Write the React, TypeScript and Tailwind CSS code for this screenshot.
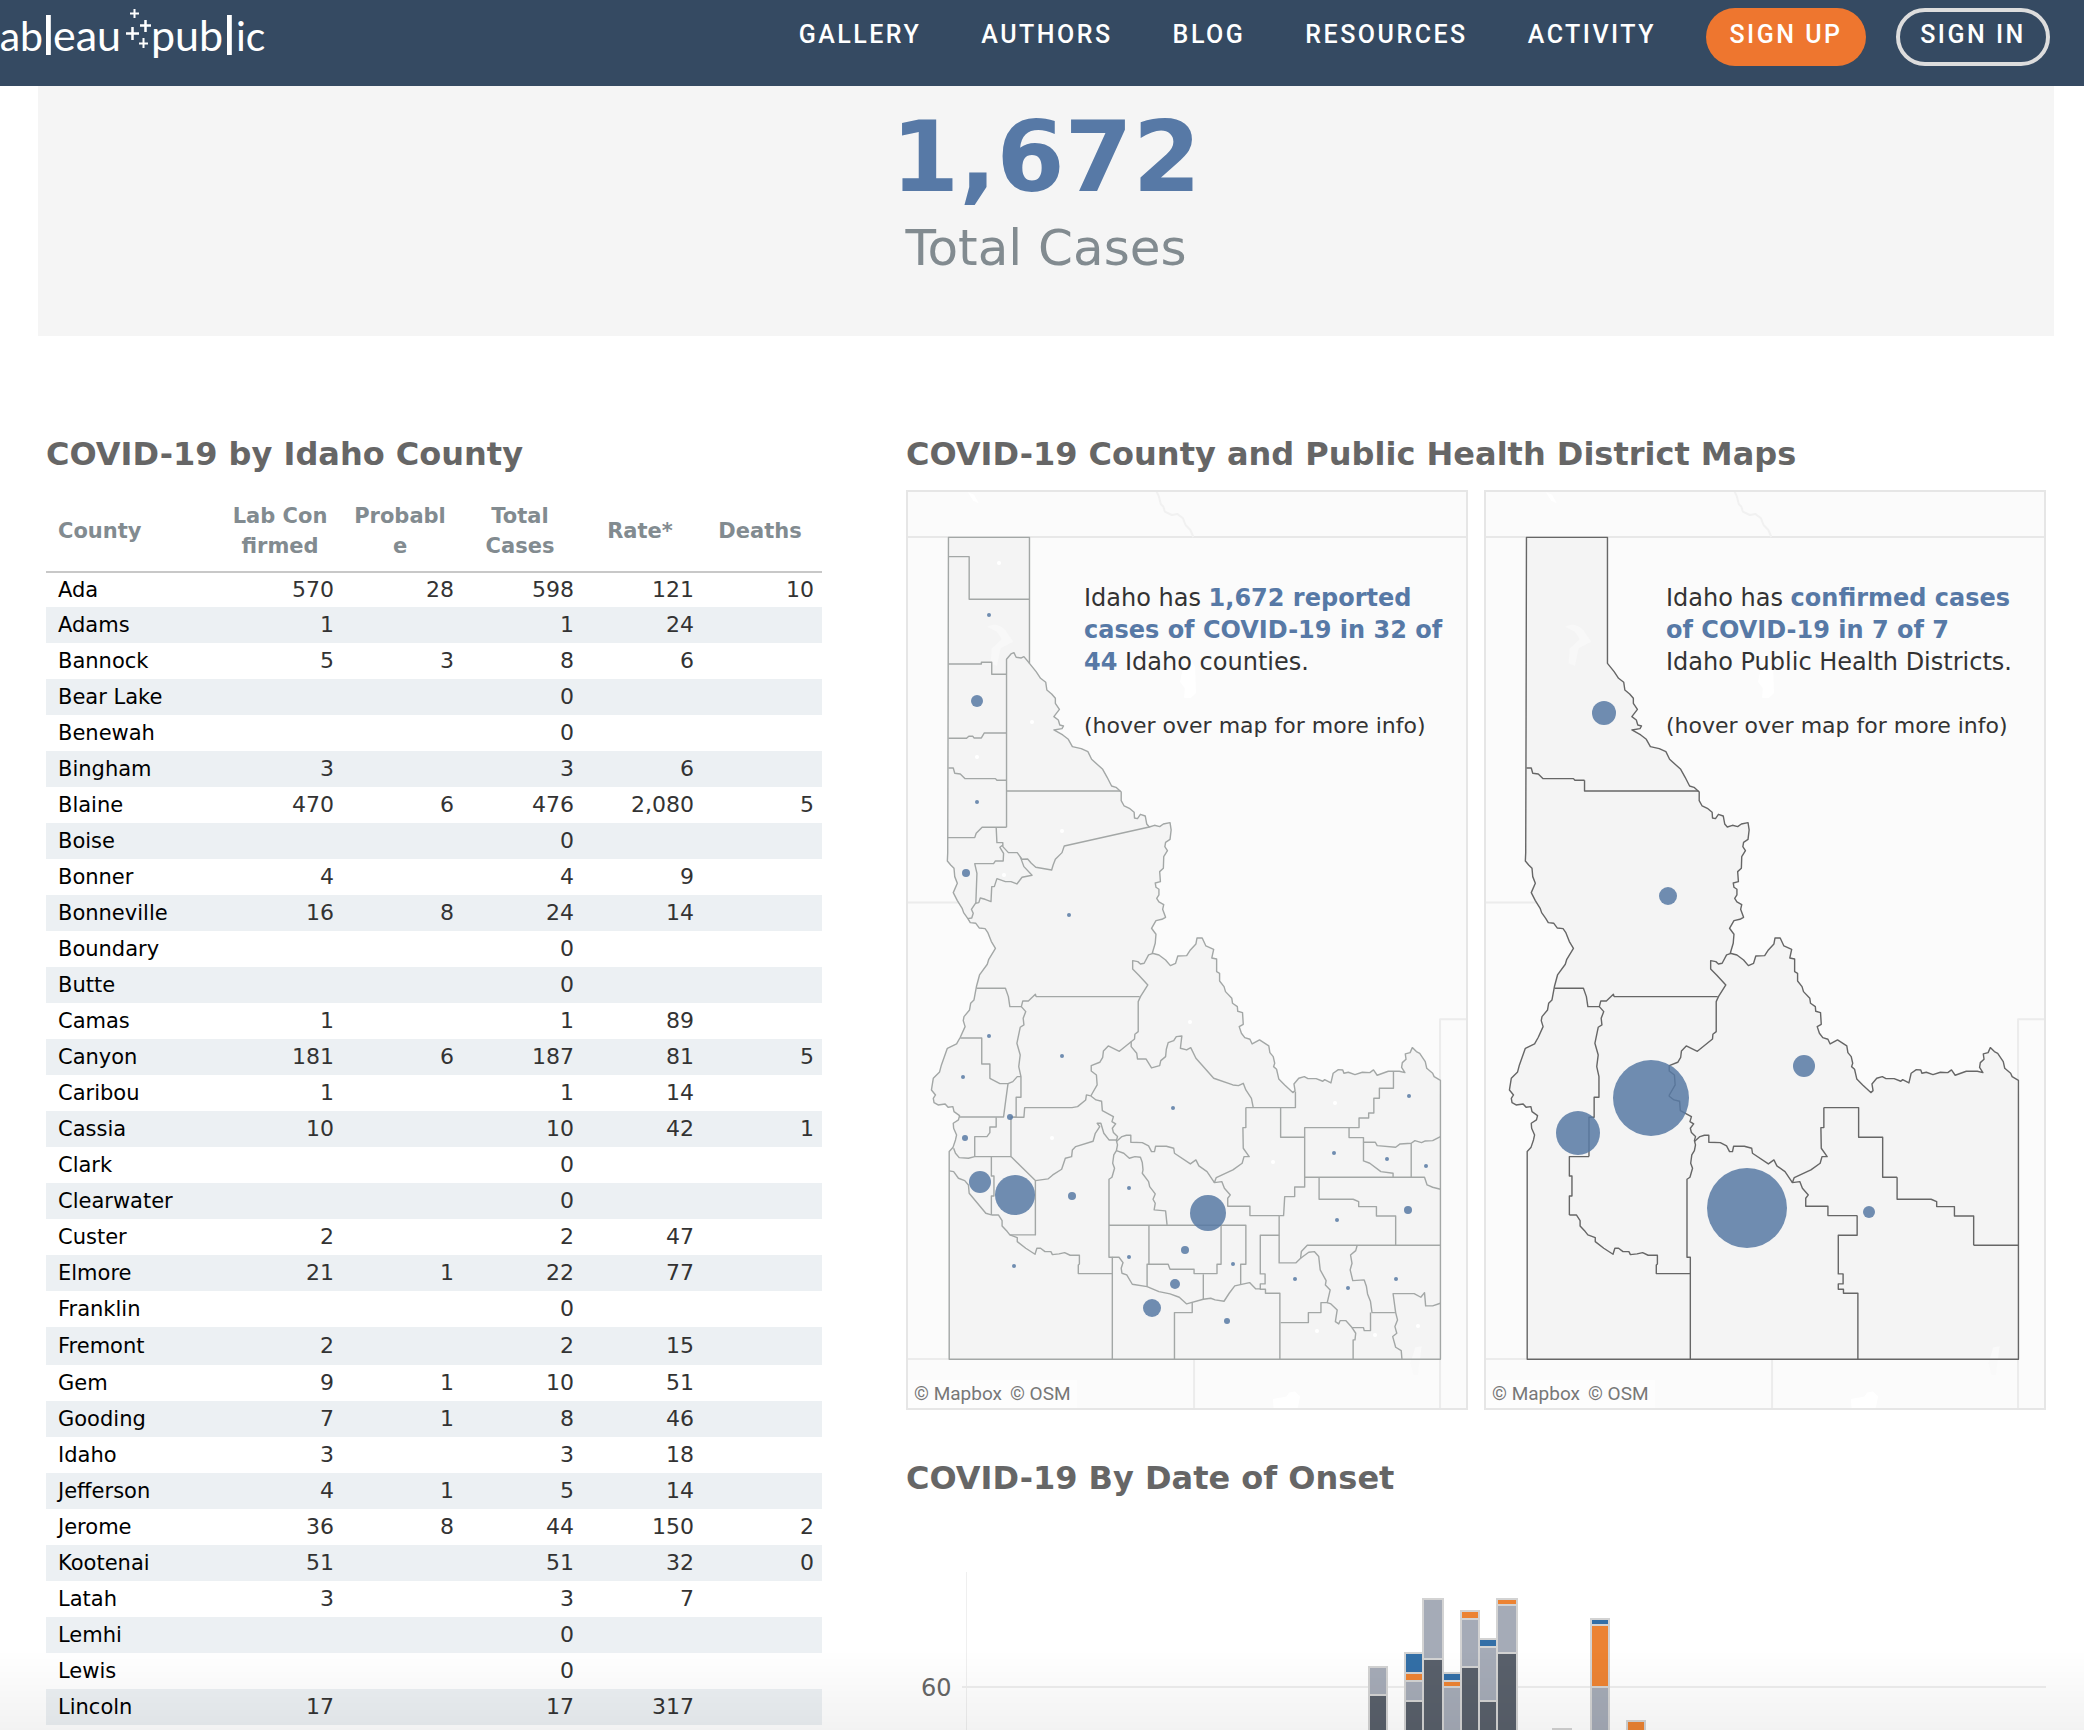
import React from "react";

type CountyRow = [string, string, string, string, string, string];

const counties: CountyRow[] = [
  ["Ada", "570", "28", "598", "121", "10"],
  ["Adams", "1", "", "1", "24", ""],
  ["Bannock", "5", "3", "8", "6", ""],
  ["Bear Lake", "", "", "0", "", ""],
  ["Benewah", "", "", "0", "", ""],
  ["Bingham", "3", "", "3", "6", ""],
  ["Blaine", "470", "6", "476", "2,080", "5"],
  ["Boise", "", "", "0", "", ""],
  ["Bonner", "4", "", "4", "9", ""],
  ["Bonneville", "16", "8", "24", "14", ""],
  ["Boundary", "", "", "0", "", ""],
  ["Butte", "", "", "0", "", ""],
  ["Camas", "1", "", "1", "89", ""],
  ["Canyon", "181", "6", "187", "81", "5"],
  ["Caribou", "1", "", "1", "14", ""],
  ["Cassia", "10", "", "10", "42", "1"],
  ["Clark", "", "", "0", "", ""],
  ["Clearwater", "", "", "0", "", ""],
  ["Custer", "2", "", "2", "47", ""],
  ["Elmore", "21", "1", "22", "77", ""],
  ["Franklin", "", "", "0", "", ""],
  ["Fremont", "2", "", "2", "15", ""],
  ["Gem", "9", "1", "10", "51", ""],
  ["Gooding", "7", "1", "8", "46", ""],
  ["Idaho", "3", "", "3", "18", ""],
  ["Jefferson", "4", "1", "5", "14", ""],
  ["Jerome", "36", "8", "44", "150", "2"],
  ["Kootenai", "51", "", "51", "32", "0"],
  ["Latah", "3", "", "3", "7", ""],
  ["Lemhi", "", "", "0", "", ""],
  ["Lewis", "", "", "0", "", ""],
  ["Lincoln", "17", "", "17", "317", ""],
];

const headings: string[][] = [
  ["Lab Con", "firmed"],
  ["Probabl", "e"],
  ["Total", "Cases"],
  ["Rate*"],
  ["Deaths"],
];

const stateOutline =
  "M131 172H350V550L368 575L380 595L394 607L397 630L410 642L420 655V670L431 688L416 710L428 720L432 735L442 738L438 746L416 750L440 765L455 778L466 800L490 806L508 815L518 838L548 868L560 892L572 918L584 922L598 936V962L606 978L620 985L633 997L634 1014L642 1016L650 1003L663 1008L667 1032L674 1041L688 1036L702 1040L712 1032L730 1028L733 1050L730 1078L718 1087L716 1100L723 1112L713 1130L712 1165L702 1175L704 1205L690 1209L692 1222L700 1228V1245L694 1255L700 1266L713 1274L710 1288L718 1312L708 1318L692 1322L680 1345L692 1363L690 1390L682 1420L700 1425L718 1440L731 1457L745 1450L751 1428L775 1427L785 1410L800 1392L803 1374L817 1374L827 1398L848 1408L843 1434L856 1437V1475L864 1480V1503L876 1520L880 1535L897 1555L899 1570L912 1580L913 1594L926 1598L928 1633L917 1640L923 1660L932 1673L946 1678L952 1692L972 1680L997 1698L1000 1718L1009 1730L1013 1750L1010 1760L1018 1768L1024 1797L1040 1815L1062 1838L1068 1832L1065 1812L1078 1795L1093 1790L1103 1796H1125L1143 1804L1148 1799L1165 1809L1171 1780L1185 1769L1197 1770L1200 1780L1212 1777L1230 1784L1250 1777L1270 1778L1280 1770L1290 1786L1320 1774H1350L1365 1778L1356 1762L1358 1748L1368 1738L1366 1722L1379 1718L1385 1703L1396 1715L1405 1720L1420 1745L1424 1765L1440 1780L1444 1790L1461 1801V2638H133V2015L143 2003L150 1980L153 1965L145 1945L144 1930L158 1920L161 1907L146 1895L143 1880L130 1882L122 1872L103 1875L92 1868L90 1855L96 1845L85 1830L90 1795L107 1776L112 1755L128 1705L153 1692L163 1672L176 1640L171 1622L173 1610L188 1590L191 1570L200 1560L207 1518L215 1485L236 1453L240 1438L258 1405L247 1385L240 1365L237 1357L230 1346L214 1344L205 1330L190 1328L183 1315L172 1298L168 1285L155 1262L144 1238L155 1210L148 1190L146 1165L137 1155L128 1143L129 1118L130 700Z";

const latahNorth = "M131 864H144L148 880L163 882L176 896H258L262 901H288";

const northernCounties = [
  "M131 230H187V358H350",
  "M131 552H220V547H248V583H289",
  "M288 1042V538L300 522L308 518L314 532L328 534L335 530L350 550",
  "M131 775H180L186 769H197L200 774H220L228 759H288",
  latahNorth,
  "M288 933H596",
  "M129 1073H202L206 1060L222 1042H288",
  "M260 1042L262 1088H278V1100L293 1118H317L330 1138L345 1137L355 1150L367 1162L410 1170L414 1155L420 1138L438 1118L444 1098L674 1041",
  "M278 1095L270 1102L280 1120L279 1143H258L253 1151H202L208 1180L205 1270",
  "M325 1130L335 1160L357 1186L330 1192L316 1212L300 1205H285L262 1196L255 1220H248L246 1265L230 1258L217 1254L213 1268L204 1270L193 1288L198 1300L194 1314L183 1316",
];

const idahoSouth = "M207 145H285L293 170L297 200H328L332 183H347L366 163L368 170H648";
const lemhiWest =
  "M684 40L672 45L660 70L650 72L643 65L629 62V87L645 105L670 135L650 170L644 185V275L635 283L634 297L593 334L563 318L550 333L548 352L540 367L517 377V393L531 405L533 435L520 460L516 468";
const adamsEast =
  "M328 200L340 215L333 235L335 255L325 262L316 310L325 345L321 380L327 410V472H314V532H300V650";
const owyheeNorth =
  "M247 825H266L276 842V858L290 875L297 885L317 893V905L340 925L365 943L370 925H380L392 935H408L412 944L430 942L445 938L460 946L485 946V972L482 975V1001H574";
const custerWest =
  "M516 468L530 480L545 484L547 512L577 530L573 545L583 552L574 565L577 578L588 590L585 602L588 615L585 632L578 645L575 670L580 685L573 712L565 718V952H574V1258";
const custerSouth =
  "M585 605L600 590L612 586H624V607L655 608L672 618L680 635H688L691 619H720L740 625L742 640L785 672L800 660L808 678L830 695L850 728";
const butteWest =
  "M935 503V563H927L928 625L944 650H930L925 670L900 690L855 713L850 728L870 725L877 745L893 765L886 775V799H946V827H1025";
const powerWest = "M1025 827V886H974V1002H987V1032H974V1048H988V1060H1027V1258";
const binghamEast = "M1133 712V778H1225L1240 785V800H1288V828H1340V916";

const southernCounties = [
  idahoSouth,
  lemhiWest,
  "M516 468L504 465L502 480L480 500L465 503H337L335 532H300",
  adamsEast,
  "M163 294H221V372H243V415L270 431H292L305 425L317 410H327",
  "M292 431L286 480L280 531H161",
  "M260 532V561H243V578L235 590H202V650",
  "M145 625L150 640L160 653L185 655L202 650H300",
  "M300 650L366 722V885H297",
  "M247 650V708H254V768H247V825",
  "M133 693L145 695L158 715L175 722L185 735L187 760L232 820L247 825",
  owyheeNorth,
  "M366 722L400 717L413 705L437 688L447 655L464 650L466 630L475 620L522 604L528 580L540 560L533 550H543L551 580L565 600H585",
  custerWest,
  "M585 632L605 640L620 655L635 650L650 652L655 668L657 690L655 700L672 725L675 740L690 762L684 778L690 790L687 810L718 813L722 855",
  custerSouth,
  "M625 305V320L640 340L642 357H665L680 384L702 377L705 362L718 350L720 328L725 308L740 302L747 290L762 288L758 325L775 330L786 323L800 355L848 415L900 435L915 437L928 430L935 450L950 475L955 503",
  "M935 503H1069V455",
  butteWest,
  "M1025 827H1037L1040 770H1067V741H1094V563H1241V534H1267V519H1281V475H1296V445H1334V394",
  "M1029 503V592H1094",
  "M1214 563V593H1253V607H1285L1290 617L1340 622L1352 612L1382 610L1392 602L1410 608L1420 603L1440 602L1461 590",
  "M1253 607V663L1270 670L1300 695L1333 700V711",
  "M1382 610V711",
  "M1094 712H1418L1425 735L1440 742L1461 748",
  binghamEast,
  "M1461 916H1101L1085 935L1083 955L1070 969H1025V886",
  "M1083 955L1105 937L1120 935L1132 950L1136 990L1152 1022L1150 1035L1163 1050L1155 1088H1138V1118H1104V1148H1029",
  "M565 856H935V973H921V1032",
  "M673 856V973",
  "M868 856V973H857V1001H795V988H730L725 973H668V1040",
  "M820 1003V1078",
  "M574 952H592L603 968L598 985L600 1000L613 1005L628 1033L668 1040L700 1055L730 1062L755 1072L775 1092L820 1078L840 1075L852 1080L876 1084L890 1060L905 1038L945 1028L962 1047H974",
  "M790 1088V1118H742V1258",
  powerWest,
  "M1236 916L1232 932L1218 945L1222 970L1217 990L1224 1022L1255 1020L1261 1040L1264 1062L1272 1085L1276 1118H1338",
  "M1272 1118V1172H1255L1253 1163H1222L1205 1142H1190L1186 1152L1177 1145L1182 1110L1165 1092L1155 1088",
  "M1222 1163L1232 1180L1230 1200H1225V1258",
  "M1461 1090L1440 1098H1421L1418 1058L1408 1072L1390 1061H1333L1340 1118L1345 1140L1338 1160L1343 1180L1332 1190L1340 1222L1355 1232L1357 1258",
];

const northernDistricts = [latahNorth, "M288 901V933H596"];
const southernDistricts = [
  idahoSouth,
  lemhiWest,
  adamsEast,
  "M300 650H247V708H254V768H247V825",
  owyheeNorth,
  custerWest,
  custerSouth,
  butteWest,
  powerWest,
  "M935 503H1029V592H1094V712H1133",
  binghamEast,
  "M1340 916H1461",
];

type Dot = [number, number, number];

const countyDots: Dot[] = [
  [83, 125, 2], [71, 211, 6], [71, 312, 2], [60, 383, 4], [163, 425, 2],
  [83, 546, 2], [57, 587, 2], [156, 566, 2], [104, 627, 3], [59, 648, 3],
  [74, 692, 11], [109, 705, 20], [166, 706, 4], [223, 698, 2], [267, 618, 2],
  [302, 723, 18], [279, 760, 4], [223, 767, 2], [327, 774, 2], [269, 794, 5],
  [246, 818, 9], [321, 831, 3], [108, 776, 2], [389, 789, 2], [442, 798, 2],
  [490, 789, 2], [431, 730, 2], [502, 720, 4], [428, 663, 2], [481, 669, 2],
  [520, 676, 2], [503, 606, 2],
];

const emptyDots: Dot[] = [
  [93, 73, 2], [126, 232, 2], [71, 267, 2], [156, 341, 2], [98, 385, 2],
  [284, 532, 2], [146, 648, 2], [429, 613, 2], [367, 672, 2], [411, 841, 2],
  [469, 845, 2], [512, 836, 2],
];

const districtDots: Dot[] = [
  [120, 223, 12], [184, 406, 9], [320, 576, 11], [167, 608, 38],
  [94, 643, 22], [263, 718, 40], [385, 722, 6],
];

interface MapProps {
  label: string;
  stroke: string;
  north: string[];
  south: string[];
  dots: Dot[];
  blanks: Dot[];
  children: React.ReactNode;
}

function IdahoMap({ label, stroke, north, south, dots, blanks, children }: MapProps) {
  return (
    <div className="relative min-w-0 flex-1 border-2 border-[#e6e6e6] bg-[#fbfbfb]">
      <svg viewBox="2 2 558 916" className="block h-auto w-full" role="img" aria-label={label}>
        <g transform="translate(-6 -10) scale(0.3699 0.3333)" fill="none" strokeLinejoin="round">
          <g stroke="#ececec" strokeWidth="2">
            <path d="M0 171H1600" stroke="#e8e8e8" vectorEffect="non-scaling-stroke" />
            <path d="M0 1268H160M0 2637H133M795 2638V2800M1460 2800V1618H1600" vectorEffect="non-scaling-stroke" />
            <path
              d="M688 20L700 50L705 72L712 80L716 95L735 105L750 102L765 115L772 135L785 150L793 171"
              stroke="#f1f1f1"
              vectorEffect="non-scaling-stroke"
            />
          </g>
          <path d={stateOutline} fill="#f4f4f4" />
          <g fill="#ffffff">
            <path d="M183 36L200 44L213 70L198 62Z" />
            <path d="M762 580L775 520L798 560L800 640L785 655L768 653L770 625L757 605Z" />
            <path d="M1008 2757L1045 2750L1052 2738L1068 2735L1082 2750L1075 2785H1010Z" />
          </g>
          <path d="M236 440Q260 425 285 450L306 485L272 505L262 558L245 550L248 505L275 478L262 455Z" fill="#f8f8f8" />
          <path d="M1393 2602L1410 2600L1400 2685H1388L1380 2650Z" fill="#f9f9f9" />
          <g stroke={stroke} strokeWidth="1.4">
            <path d={stateOutline} vectorEffect="non-scaling-stroke" />
            {north.map((d) => (
              <path key={d} d={d} vectorEffect="non-scaling-stroke" />
            ))}
            <g transform="translate(0 1380)">
              {south.map((d) => (
                <path key={d} d={d} vectorEffect="non-scaling-stroke" />
              ))}
            </g>
          </g>
        </g>
        {blanks.map(([x, y, r]) => (
          <circle key={`${x}-${y}`} cx={x} cy={y} r={r} fill="#ffffff" />
        ))}
        {dots.map(([x, y, r]) => (
          <circle key={`${x}-${y}`} cx={x} cy={y} r={r} fill="#5779a3" fillOpacity="0.85" />
        ))}
      </svg>
      {children}
      <div className="absolute bottom-0 left-0 flex gap-2 bg-[#fdfdfd] px-1.5 font-['Roboto',sans-serif] text-[19px] leading-7 text-[#777777]">
        <a href="#mapbox">© Mapbox</a>
        <a href="#osm">© OSM</a>
      </div>
    </div>
  );
}

const LIGHT = "#a5abb7";
const DARK = "#59606b";
const ORANGE = "#ec8333";
const BLUE = "#336fa7";

interface Bar {
  x: number;
  w: number;
  top: number;
  parts: [number, string][];
}

const bars: Bar[] = [
  { x: 462, w: 20, top: 168, parts: [[170, LIGHT], [198, DARK]] },
  { x: 498, w: 20, top: 154, parts: [[156, BLUE], [176, ORANGE], [184, LIGHT], [204, DARK]] },
  { x: 516, w: 22, top: 100, parts: [[102, LIGHT], [162, DARK]] },
  { x: 536, w: 20, top: 174, parts: [[176, BLUE], [184, ORANGE], [190, LIGHT]] },
  { x: 554, w: 20, top: 112, parts: [[114, ORANGE], [122, LIGHT], [170, DARK]] },
  { x: 572, w: 20, top: 140, parts: [[142, BLUE], [150, LIGHT], [204, DARK]] },
  { x: 590, w: 22, top: 100, parts: [[102, ORANGE], [108, LIGHT], [156, DARK]] },
  { x: 646, w: 20, top: 230, parts: [] },
  { x: 684, w: 20, top: 120, parts: [[122, BLUE], [128, ORANGE], [190, LIGHT]] },
  { x: 720, w: 20, top: 222, parts: [[224, ORANGE]] },
];

function OnsetChart() {
  const floor = 232;
  return (
    <svg viewBox="0 0 1140 232" className="block h-auto w-full" role="img" aria-label="Cases by date of onset">
      <rect x="60" y="74" width="1" height="158" fill="#efefef" />
      <rect x="56" y="188" width="1084" height="2" fill="#eeeeee" />
      <text x="15" y="198" fontSize="24" fill="#666666">60</text>
      {bars.map((bar) => (
        <g key={bar.x}>
          <rect x={bar.x} y={bar.top} width={bar.w} height={floor - bar.top} fill="#d3d3d3" />
          {bar.parts.map(([y, color], i) => {
            const end = i + 1 < bar.parts.length ? bar.parts[i + 1][0] - 2 : floor;
            return <rect key={y} x={bar.x + 2} y={y} width={bar.w - 4} height={end - y} fill={color} />;
          })}
        </g>
      ))}
    </svg>
  );
}

function Logo() {
  return (
    <svg width="270" height="86" viewBox="0 0 270 86" className="block shrink-0" role="img" aria-label="tableau public">
      <g fill="#ffffff" fontFamily="Lato, sans-serif" fontSize="41">
        <text x="43" y="51" textAnchor="end">ab</text>
        <text x="42" y="55" fontSize="54">l</text>
        <text x="53" y="51" fontSize="43">eau</text>
        <text x="151" y="51" fontSize="43">pub</text>
        <text x="223" y="55" fontSize="54">l</text>
        <text x="236" y="51">ic</text>
      </g>
      <g stroke="#ffffff" fill="none">
        <path d="M134.500 9V18M130 13.500H139" strokeWidth="2" />
        <path d="M145.500 20V32M140 25.500H151" strokeWidth="2.500" />
        <path d="M132.500 27V40M126 33.500H139" strokeWidth="2.500" />
        <path d="M143.500 38V48M139 43.500H148" strokeWidth="2" />
      </g>
    </svg>
  );
}

const links = ["Gallery", "Authors", "Blog", "Resources", "Activity"];

export default function App() {
  return (
    <div className="min-h-screen bg-white font-['DejaVu_Sans',Verdana,sans-serif] text-[#333333]">
      <header className="flex h-[86px] items-start justify-between bg-[#354a62] pr-[34px]">
        <a href="#home"><Logo /></a>
        <nav className="flex items-center pt-2 font-['Roboto',sans-serif] text-[25px] font-medium tracking-widest text-white uppercase">
          <div className="mr-[50px] flex gap-[60px] pb-1">
            {links.map((link) => (
              <a key={link} href={`#${link.toLowerCase()}`} className="leading-[54px]">{link}</a>
            ))}
          </div>
          <button type="button" className="mr-[30px] h-[58px] w-[160px] rounded-full bg-[#ee762f] pb-1 uppercase">Sign Up</button>
          <button type="button" className="h-[58px] w-[154px] rounded-full border-4 border-[#dddddd] pb-1 uppercase">Sign In</button>
        </nav>
      </header>

      <section className="mr-[30px] ml-[38px] flex h-[250px] flex-col items-center bg-[#f5f5f5] pt-3">
        <div className="text-[98px] leading-[118px] font-bold text-[#5779a6]">1,672</div>
        <div className="text-[50px] leading-[64px] text-[#828b90]">Total Cases</div>
      </section>

      <main className="grid grid-cols-[776fr_1140fr] items-start gap-[84px] pt-[98px] pr-[38px] pl-[46px]">
        <section>
          <h2 className="mb-4 text-[32px] leading-10 font-bold text-[#666666]">COVID-19 by Idaho County</h2>
          <table className="w-full table-fixed border-collapse text-[22px]">
            <colgroup>
              <col />
              {headings.map((h) => (
                <col key={h[0]} className="w-[120px]" />
              ))}
            </colgroup>
            <thead>
              <tr className="h-[82px] border-b-2 border-[#c8c8c8] text-[21px] leading-[30px] font-bold text-[#828b90]">
                <th scope="col" className="p-0 pl-3 text-left">County</th>
                {headings.map((h) => (
                  <th key={h[0]} scope="col" className="p-0 pr-1 text-center">
                    {h.map((line) => (
                      <span key={line} className="block whitespace-nowrap">{line}</span>
                    ))}
                  </th>
                ))}
              </tr>
            </thead>
            <tbody>
              {counties.map(([name, ...values]) => (
                <tr
                  key={name}
                  className={`even:bg-[#ecf0f3] ${name === "Ada" ? "h-[35px]" : name === "Fremont" ? "h-[38px]" : "h-9"}`}
                >
                  <th scope="row" className="p-0 pl-3 text-left text-[21px] leading-8 font-normal text-black">{name}</th>
                  {values.map((value, i) => (
                    <td key={i} className="p-0 pr-2 text-right leading-8">{value}</td>
                  ))}
                </tr>
              ))}
            </tbody>
          </table>
        </section>

        <section>
          <h2 className="mb-4 text-[32px] leading-10 font-bold whitespace-nowrap text-[#666666]">
            COVID-19 County and Public Health District Maps
          </h2>
          <div className="flex gap-4">
            <IdahoMap
              label="Idaho county map"
              stroke="#a3a7a6"
              north={northernCounties}
              south={southernCounties}
              dots={countyDots}
              blanks={emptyDots}
            >
              <div className="absolute top-[90px] right-0 left-[176px] text-2xl leading-8 whitespace-nowrap">
                <p>Idaho has <b className="text-[#5779a6]">1,672 reported<br />cases of COVID-19 in 32 of<br />44</b> Idaho counties.</p>
                <p className="mt-8 text-[22px]">(hover over map for more info)</p>
              </div>
            </IdahoMap>
            <IdahoMap
              label="Idaho public health district map"
              stroke="#666666"
              north={northernDistricts}
              south={southernDistricts}
              dots={districtDots}
              blanks={[]}
            >
              <div className="absolute top-[90px] right-0 left-[180px] text-2xl leading-8 whitespace-nowrap">
                <p>Idaho has <b className="text-[#5779a6]">confirmed cases<br />of COVID-19 in 7 of 7</b><br />Idaho Public Health Districts.</p>
                <p className="mt-8 text-[22px]">(hover over map for more info)</p>
              </div>
            </IdahoMap>
          </div>
          <h2 className="mt-12 text-[32px] leading-10 font-bold text-[#666666]">COVID-19 By Date of Onset</h2>
          <OnsetChart />
        </section>
      </main>
      <div className="pointer-events-none fixed inset-x-0 bottom-0 h-20 bg-linear-to-b from-transparent to-black/5" />
    </div>
  );
}
